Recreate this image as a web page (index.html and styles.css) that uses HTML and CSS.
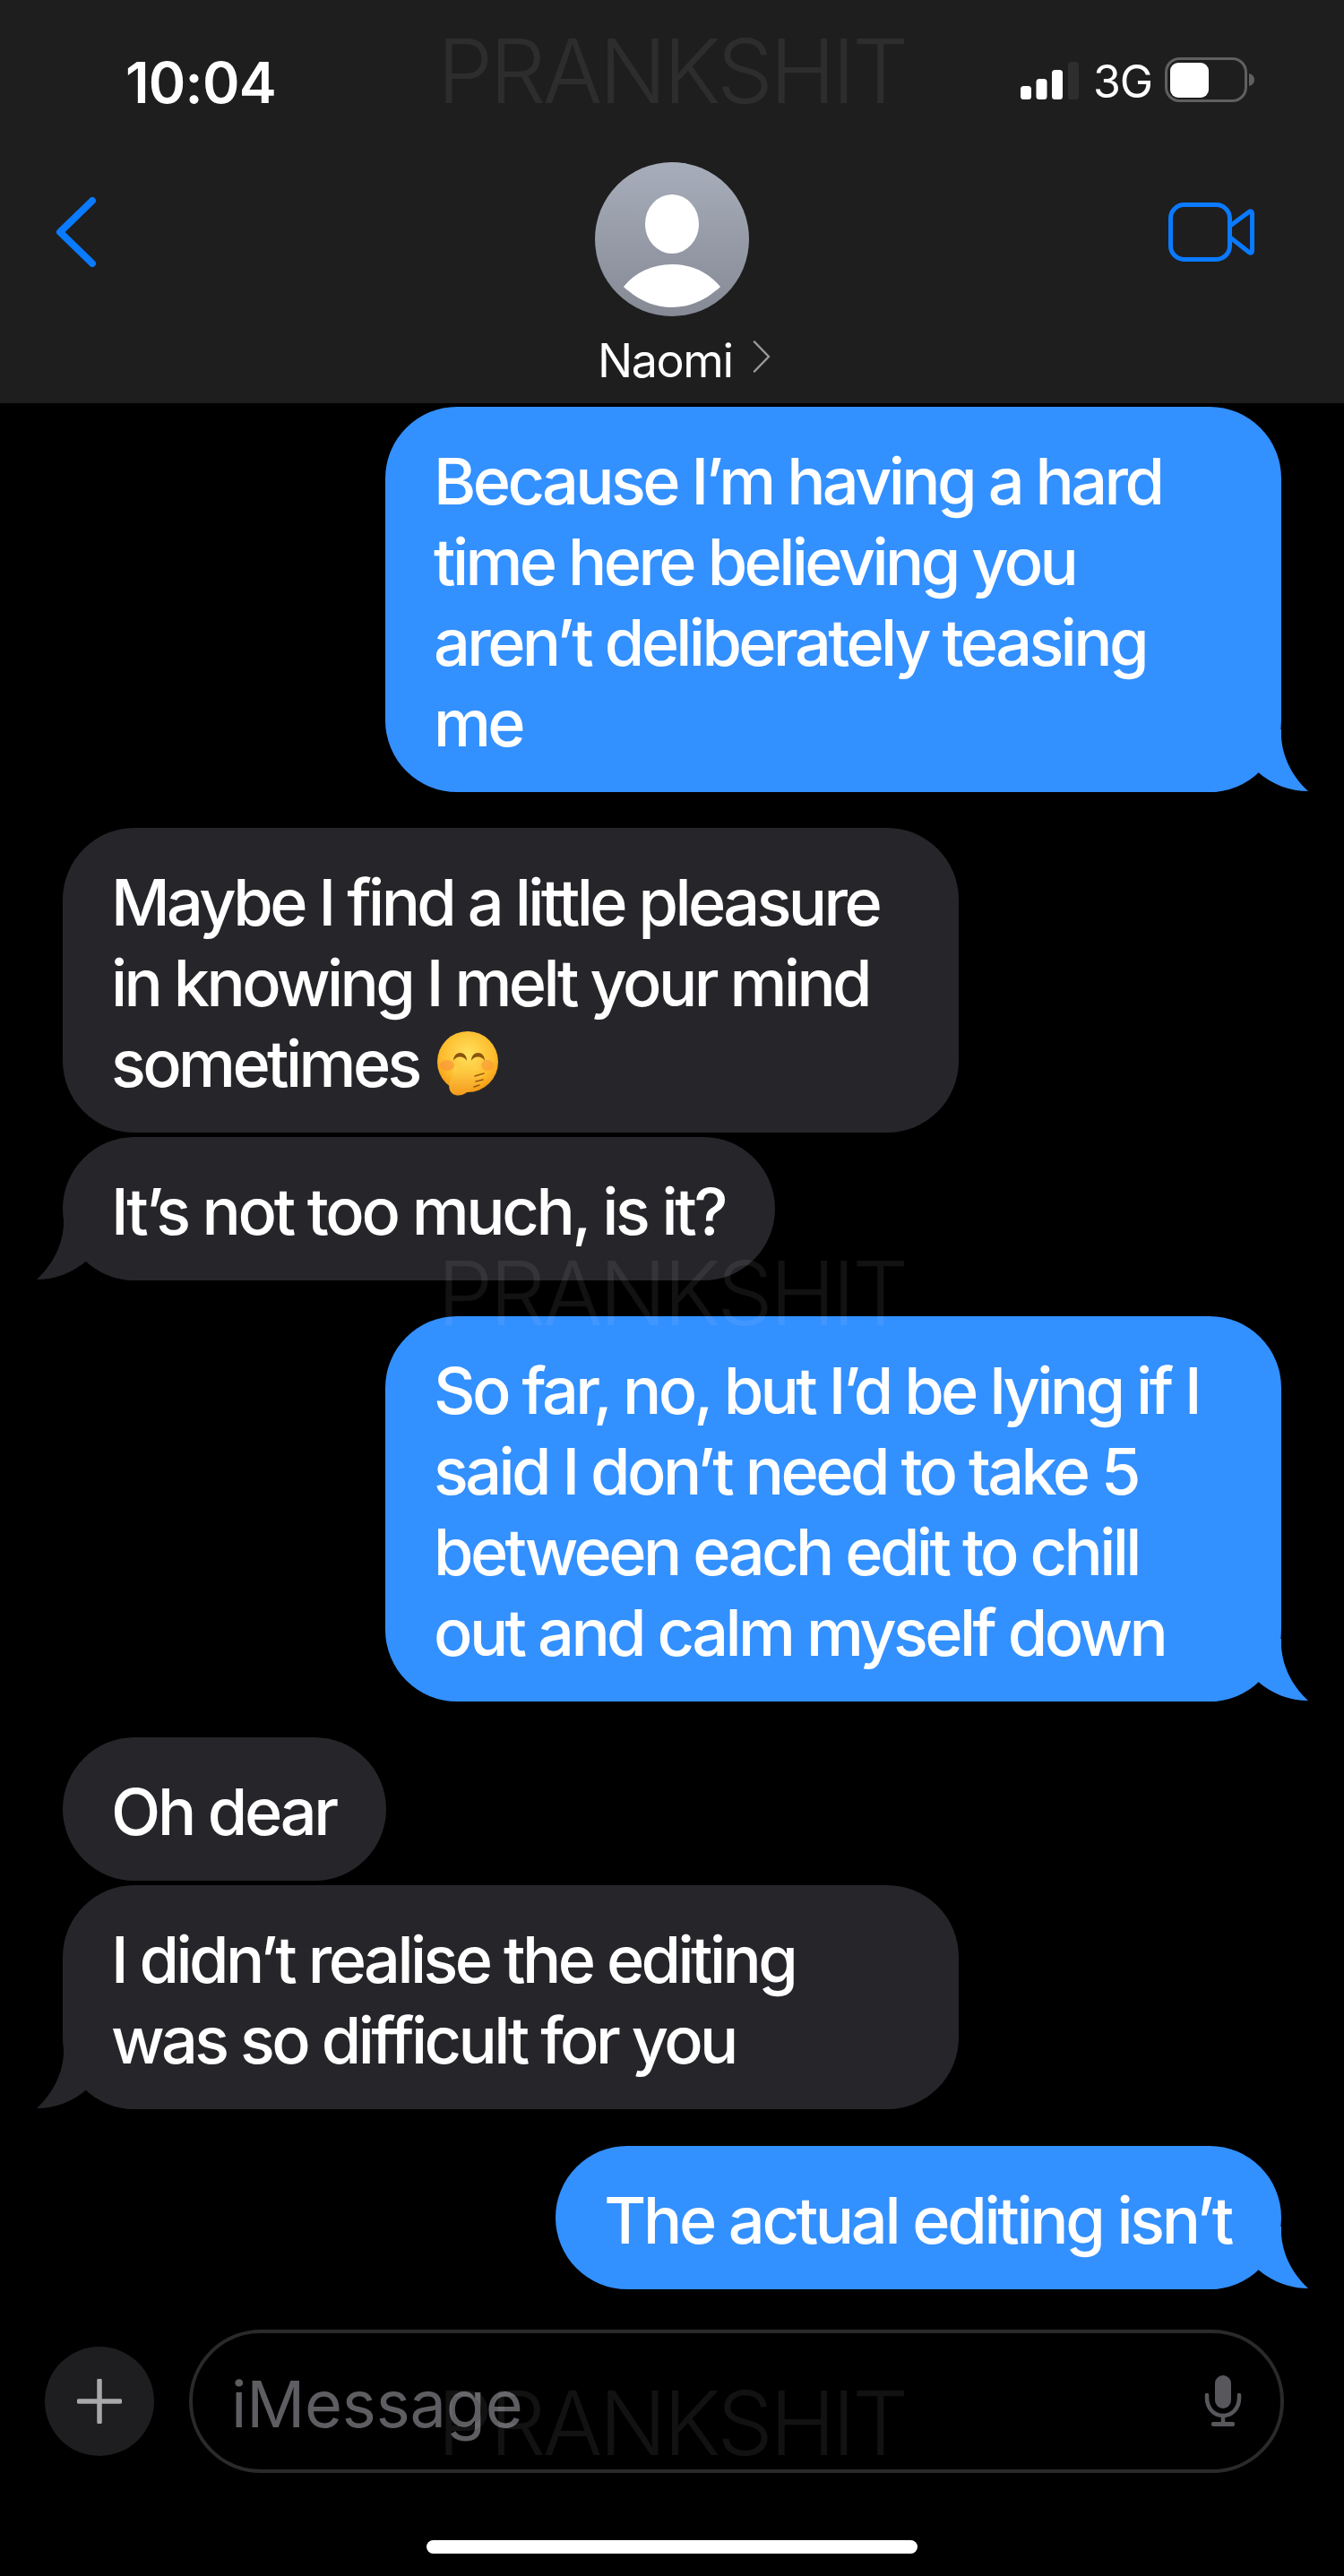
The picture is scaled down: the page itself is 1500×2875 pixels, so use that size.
FILE: index.html
```html
<!DOCTYPE html>
<html lang="en">
<head>
<meta charset="utf-8">
<title>Naomi</title>
<link rel="stylesheet" href="styles.css">
</head>
<body>
<main class="phone">
  <header class="header">
    <div class="status">
      <span class="time">10:04</span>
      <div class="status-right">
        <svg class="signal" viewBox="0 0 65 42" aria-hidden="true">
          <rect x="0" y="27" width="12" height="15" rx="3.5" fill="#fff"/>
          <rect x="17.500" y="19" width="12" height="23" rx="3.500" fill="#fff"/>
          <rect x="35" y="9" width="12" height="33" rx="3.500" fill="#fff"/>
          <rect x="53" y="0" width="12" height="42" rx="3.500" fill="#2e2e2e"/>
        </svg>
        <span class="network">3G</span>
        <svg class="battery" viewBox="0 0 100 50" aria-hidden="true">
          <rect x="1.500" y="1.500" width="89" height="47" rx="15" fill="none" stroke="#606060" stroke-width="3"/>
          <rect x="6" y="6" width="43" height="39" rx="9" fill="#fff"/>
          <path d="M94 18c4 1 6 4 6 7s-2 6-6 7z" fill="#606060"/>
        </svg>
      </div>
    </div>
    <div class="nav">
      <svg class="back" viewBox="0 0 46 78" aria-hidden="true">
        <path d="M41 4 5 39l36 35" fill="none" stroke="#0a7aff" stroke-width="8" stroke-linecap="round" stroke-linejoin="round"/>
      </svg>
      <div class="contact">
        <svg class="avatar" viewBox="0 0 172 172" aria-hidden="true">
          <defs>
            <linearGradient id="avatarBg" x1="0" y1="0" x2="0" y2="1">
              <stop offset="0" stop-color="#a7adba"/>
              <stop offset="1" stop-color="#858a95"/>
            </linearGradient>
          </defs>
          <circle cx="86" cy="86" r="86" fill="url(#avatarBg)"/>
          <ellipse cx="86" cy="69" rx="30" ry="33" fill="#fff"/>
          <path d="M32 139C45 123 64 114 86 114s41 9 54 25c-3 3-3 3-6 5-13 11-30 18-48 18s-35-7-48-18c-3-2-3-2-6-5z" fill="#fff"/>
        </svg>
        <div class="contact-name">
          <span>Naomi</span>
          <svg class="name-chevron" viewBox="0 0 20 36" aria-hidden="true">
            <path d="M2 1.500 18 18 2 34.500" fill="none" stroke="#9a9a9a" stroke-width="2.500" stroke-linecap="round" stroke-linejoin="round"/>
          </svg>
        </div>
      </div>
      <svg class="video" viewBox="0 0 96 66" aria-hidden="true">
        <rect x="2.500" y="2.500" width="66" height="61" rx="15" fill="none" stroke="#0a7aff" stroke-width="5"/>
        <path d="M69 26 90 10.500c2-1.500 3.500-.5 3.500 1.500v42c0 2-1.500 3-3.500 1.500L69 39" fill="none" stroke="#0a7aff" stroke-width="5" stroke-linejoin="round"/>
      </svg>
    </div>
  </header>

  <section class="thread">
    <div class="bubble sent wide">
      Because I’m having a hard<br>time here believing you<br>aren’t deliberately teasing<br>me
      <svg class="tail tail-sent" viewBox="0 0 110 70" aria-hidden="true"><path d="M0 0H80V9C82 35 95 55 110 69 90 69 70 62 53 47 40 60 20 70 0 70Z"/></svg>
    </div>
    <div class="bubble received wide group">
      Maybe I find a little pleasure<br>in knowing I melt your mind<br>sometimes<svg class="emoji" viewBox="0 0 68 72" aria-hidden="true">
        <defs>
          <radialGradient id="face" cx=".5" cy=".38" r=".62">
            <stop offset="0" stop-color="#ffe25e"/>
            <stop offset=".7" stop-color="#fdbb2c"/>
            <stop offset="1" stop-color="#f39a14"/>
          </radialGradient>
          <linearGradient id="hand" x1="0" y1="0" x2="0" y2="1">
            <stop offset="0" stop-color="#ffd24a"/>
            <stop offset="1" stop-color="#f59a1c"/>
          </linearGradient>
        </defs>
        <circle cx="34" cy="34" r="34" fill="url(#face)"/>
        <ellipse cx="11" cy="38" rx="8" ry="6" fill="#f98a3c" opacity=".55"/>
        <ellipse cx="56" cy="38" rx="7" ry="6" fill="#f98a3c" opacity=".45"/>
        <path d="M18 33c0-12 15-12 15 0-3-6-12-6-15 0zM38 33c0-12 15-12 15 0-3-6-12-6-15 0z" fill="#8a5410"/>
        <path d="M19 40c2-2 4 1 5 3l3 6 16-9c2-1 4 1 2 3l-8 7 13-3c2 0 3 2 1 3l-12 6 9-1c2 0 2 2 0 3l-10 5c-4 6-11 10-18 8-6-2-8-8-6-14l3-7c0-4 0-8 2-10z" fill="url(#hand)"/>
        <path d="M42 50l10-3M43 56l8-2M41 62l6-2" stroke="#9a5a10" stroke-width="1.500" fill="none" stroke-linecap="round"/>
      </svg>
    </div>
    <div class="bubble received tight loose">
      It’s not too much, is it?
      <svg class="tail tail-received" viewBox="0 0 110 70" aria-hidden="true"><path d="M0 0H80V9C82 35 95 55 110 69 90 69 70 62 53 47 40 60 20 70 0 70Z"/></svg>
    </div>
    <div class="bubble sent wide group">
      So far, no, but I’d be lying if I<br>said I don’t need to take 5<br>between each edit to chill<br>out and calm myself down
      <svg class="tail tail-sent" viewBox="0 0 110 70" aria-hidden="true"><path d="M0 0H80V9C82 35 95 55 110 69 90 69 70 62 53 47 40 60 20 70 0 70Z"/></svg>
    </div>
    <div class="bubble received group loose">Oh dear</div>
    <div class="bubble received wide tight">
      I didn’t realise the editing<br>was so difficult for you
      <svg class="tail tail-received" viewBox="0 0 110 70" aria-hidden="true"><path d="M0 0H80V9C82 35 95 55 110 69 90 69 70 62 53 47 40 60 20 70 0 70Z"/></svg>
    </div>
    <div class="bubble sent group last loose">
      The actual editing isn’t
      <svg class="tail tail-sent" viewBox="0 0 110 70" aria-hidden="true"><path d="M0 0H80V9C82 35 95 55 110 69 90 69 70 62 53 47 40 60 20 70 0 70Z"/></svg>
    </div>
  </section>

  <section class="composer">
    <div class="plus">
      <svg class="plus-icon" viewBox="0 0 50 50" aria-hidden="true">
        <path d="M25 2v46M2 25h46" stroke="#a8a8aa" stroke-width="5.500" stroke-linecap="round"/>
      </svg>
    </div>
    <div class="field">
      <span class="placeholder">iMessage</span>
      <svg class="mic" viewBox="0 0 42 58" aria-hidden="true">
        <rect x="12" y="0" width="18" height="37" rx="9" fill="#58585c"/>
        <path d="M3 22v3c0 12 8 20 18 20s18-8 18-20v-3" fill="none" stroke="#58585c" stroke-width="4.500" stroke-linecap="round"/>
        <path d="M21 45v9" stroke="#58585c" stroke-width="4.500"/>
        <rect x="8" y="52" width="26" height="5" rx="2" fill="#58585c"/>
      </svg>
    </div>
  </section>
  <div class="home-indicator"></div>

  <div class="watermark wm-top">PRANKSHIT</div>
  <div class="watermark wm-middle">PRANKSHIT</div>
  <div class="watermark wm-bottom">PRANKSHIT</div>
</main>
</body>
</html>
```
FILE: styles.css
```css
* { box-sizing: border-box; }

html, body {
  margin: 0;
  padding: 0;
  background: #000;
}

.phone {
  position: relative;
  width: 1500px;
  height: 2875px;
  overflow: hidden;
  background: #000;
  color: #fff;
  font-family: Inter, "Liberation Sans", sans-serif;
}

/* Header */
.header {
  height: 450px;
  background: #1e1e1e;
  display: flex;
  flex-direction: column;
}

.status {
  height: 170px;
  padding: 54px 100px 0 140px;
  display: flex;
  justify-content: space-between;
  align-items: flex-start;
}

.time {
  font-size: 63px;
  line-height: 76px;
  font-weight: 600;
  letter-spacing: -0.8px;
}

.status-right {
  display: flex;
  align-items: flex-start;
  padding-top: 11px;
}

.signal {
  width: 65px;
  height: 42px;
  margin-top: 4px;
}

.network {
  margin-left: 16px;
  width: 64px;
  padding-top: 1px;
  font-size: 50px;
  line-height: 50px;
  font-weight: 400;
  letter-spacing: -1.2px;
}

.battery {
  width: 100px;
  height: 50px;
  margin-top: -1px;
  margin-left: 16px;
}

.nav {
  position: relative;
  flex: 1;
  display: flex;
  justify-content: space-between;
  align-items: flex-start;
  padding: 50px 100px 0 62px;
}

.back {
  width: 46px;
  height: 78px;
}

.contact {
  position: absolute;
  left: 664px;
  top: 11px;
  display: flex;
  flex-direction: column;
  align-items: flex-start;
}

.avatar {
  width: 172px;
  height: 172px;
}

.contact-name {
  display: flex;
  align-items: flex-start;
  margin-top: 24px;
  margin-left: 3px;
  font-size: 52px;
  line-height: 52px;
  font-weight: 400;
  letter-spacing: -1.4px;
}

.name-chevron {
  width: 20px;
  height: 36px;
  margin-left: 22px;
  margin-top: 3px;
}

.video {
  width: 96px;
  height: 66px;
  margin-top: 6px;
}

/* Messages */
.thread {
  isolation: isolate;
  display: flex;
  flex-direction: column;
  padding: 4px 70px 0;
}

.bubble {
  position: relative;
  width: fit-content;
  padding: 38px 56px 32px 54px;
  border-radius: 80px;
  font-size: 72px;
  line-height: 90px;
  font-weight: 450;
  letter-spacing: -3.6px;
  white-space: nowrap;
}

.wide { width: 1000px; }
.loose { letter-spacing: -3.3px; }

.group { margin-top: 40px; }
.tight { margin-top: 5px; }
.last { margin-top: 41px; }

.sent {
  align-self: flex-end;
  background: #3390ff;
}

.received {
  align-self: flex-start;
  background: #26262a;
}

.tail {
  position: absolute;
  bottom: 0;
  z-index: -1;
  width: 110px;
  height: 70px;
}

.tail-sent {
  right: -30px;
  fill: #3390ff;
}

.tail-received {
  left: -29px;
  fill: #26262a;
  transform: scaleX(-1);
}

.emoji {
  display: inline-block;
  width: 68px;
  height: 72px;
  margin-left: 20px;
  vertical-align: -10px;
}

/* Composer */
.composer {
  position: absolute;
  left: 50px;
  right: 67px;
  top: 2600px;
  display: flex;
  align-items: center;
  gap: 39px;
}

.plus {
  flex: none;
  width: 122px;
  height: 122px;
  border-radius: 50%;
  background: #1e1e20;
  display: flex;
  align-items: center;
  justify-content: center;
}

.plus-icon {
  width: 50px;
  height: 50px;
}

.field {
  flex: 1;
  height: 160px;
  border: 4px solid #2a2a2c;
  border-radius: 80px;
  display: flex;
  align-items: center;
  justify-content: space-between;
  padding: 0 43px 0 43px;
}

.placeholder {
  padding-top: 6px;
  font-size: 72px;
  line-height: 90px;
  letter-spacing: -0.2px;
  color: #5e5e62;
}

.mic {
  width: 42px;
  height: 58px;
}

.home-indicator {
  position: absolute;
  left: 476px;
  top: 2835px;
  width: 548px;
  height: 15px;
  border-radius: 8px;
  background: #fff;
}

/* Watermark stamped over the screenshot */
.watermark {
  position: absolute;
  left: 488px;
  font-size: 99px;
  line-height: 100px;
  font-weight: 300;
  letter-spacing: -3.6px;
  color: rgba(255, 255, 255, 0.07);
  white-space: nowrap;
}

.wm-top { top: 29px; }
.wm-middle { top: 1393px; }
.wm-bottom { top: 2654px; }
```
